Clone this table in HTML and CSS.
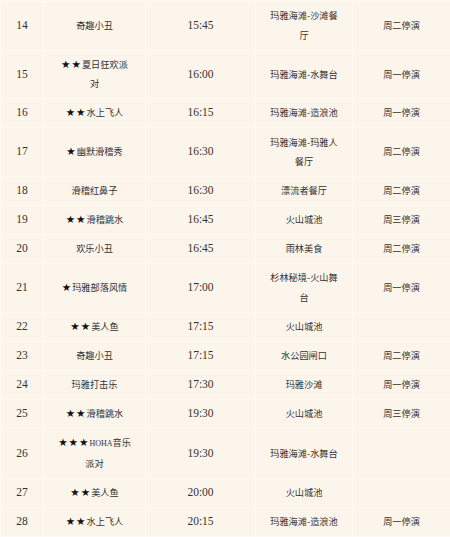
FILE: index.html
```html
<!DOCTYPE html>
<html lang="zh-CN">
<head>
<meta charset="utf-8">
<title>表演时间表</title>
<link rel="stylesheet" href="styles.css">
</head>
<body>
<table class="schedule">
  <colgroup>
    <col class="c-no">
    <col class="c-name">
    <col class="c-time">
    <col class="c-place">
    <col class="c-note">
  </colgroup>
  <tbody>
    <tr><td class="num">14</td><td class="txt name">奇趣小丑</td><td class="num">15:45</td><td class="txt">玛雅海滩-沙滩餐厅</td><td class="txt">周二停演</td></tr>
    <tr><td class="num">15</td><td class="txt name"><span class="star">★★</span>夏日狂欢派对</td><td class="num">16:00</td><td class="txt">玛雅海滩-水舞台</td><td class="txt">周一停演</td></tr>
    <tr><td class="num">16</td><td class="txt name"><span class="star">★★</span>水上飞人</td><td class="num">16:15</td><td class="txt">玛雅海滩-造浪池</td><td class="txt">周一停演</td></tr>
    <tr><td class="num">17</td><td class="txt name"><span class="star">★</span>幽默滑稽秀</td><td class="num">16:30</td><td class="txt">玛雅海滩-玛雅人餐厅</td><td class="txt">周二停演</td></tr>
    <tr><td class="num">18</td><td class="txt name">滑稽红鼻子</td><td class="num">16:30</td><td class="txt">漂流者餐厅</td><td class="txt">周二停演</td></tr>
    <tr><td class="num">19</td><td class="txt name"><span class="star">★★</span>滑稽跳水</td><td class="num">16:45</td><td class="txt">火山城池</td><td class="txt">周三停演</td></tr>
    <tr><td class="num">20</td><td class="txt name">欢乐小丑</td><td class="num">16:45</td><td class="txt">雨林美食</td><td class="txt">周二停演</td></tr>
    <tr><td class="num">21</td><td class="txt name"><span class="star">★</span>玛雅部落风情</td><td class="num">17:00</td><td class="txt">杉林秘境-火山舞台</td><td class="txt">周一停演</td></tr>
    <tr><td class="num">22</td><td class="txt name"><span class="star">★★</span>美人鱼</td><td class="num">17:15</td><td class="txt">火山城池</td><td class="txt"></td></tr>
    <tr><td class="num">23</td><td class="txt name">奇趣小丑</td><td class="num">17:15</td><td class="txt">水公园闸口</td><td class="txt">周二停演</td></tr>
    <tr><td class="num">24</td><td class="txt name">玛雅打击乐</td><td class="num">17:30</td><td class="txt">玛雅沙滩</td><td class="txt">周一停演</td></tr>
    <tr><td class="num">25</td><td class="txt name"><span class="star">★★</span>滑稽跳水</td><td class="num">19:30</td><td class="txt">火山城池</td><td class="txt">周三停演</td></tr>
    <tr><td class="num">26</td><td class="txt name"><span class="star">★★★</span><span class="latin">HOHA</span>音乐派对</td><td class="num">19:30</td><td class="txt">玛雅海滩-水舞台</td><td class="txt"></td></tr>
    <tr><td class="num">27</td><td class="txt name"><span class="star">★★</span>美人鱼</td><td class="num">20:00</td><td class="txt">火山城池</td><td class="txt"></td></tr>
    <tr><td class="num">28</td><td class="txt name"><span class="star">★★</span>水上飞人</td><td class="num">20:15</td><td class="txt">玛雅海滩-造浪池</td><td class="txt">周一停演</td></tr>
  </tbody>
</table>
</body>
</html>
```

FILE: styles.css
```css
html, body {
  margin: 0;
  padding: 0;
  background: #fcf5eb;
}

.schedule {
  width: 450px;
  margin-top: 1px;
  border-collapse: collapse;
  table-layout: fixed;
  background: #fcf5eb;
  color: #333;
}

.c-no { width: 43px; }
.c-name { width: 102px; }
.c-time { width: 110px; }
.c-place { width: 97px; }
.c-note { width: 98px; }

.schedule td {
  border: 1px solid #fffaf3;
  text-align: center;
  vertical-align: middle;
  line-height: 19.5px;
  padding: 4.3px 13px;
}

.schedule td.num {
  font-family: "Liberation Serif", "Times New Roman", serif;
  font-size: 11.5px;
  padding: 4.3px 2px;
}

.schedule td.txt {
  font-family: "Noto Sans CJK SC", "Noto Sans", sans-serif;
  font-size: 9.2px;
}

.schedule td.name {
  padding-left: 14px;
  padding-right: 14px;
}

.star {
  font-family: "DejaVu Sans", sans-serif;
  font-size: 10.5px;
  line-height: 1;
  letter-spacing: 1px;
  color: #111;
}

.latin {
  font-family: "Liberation Serif", serif;
  font-size: 8px;
}
```
